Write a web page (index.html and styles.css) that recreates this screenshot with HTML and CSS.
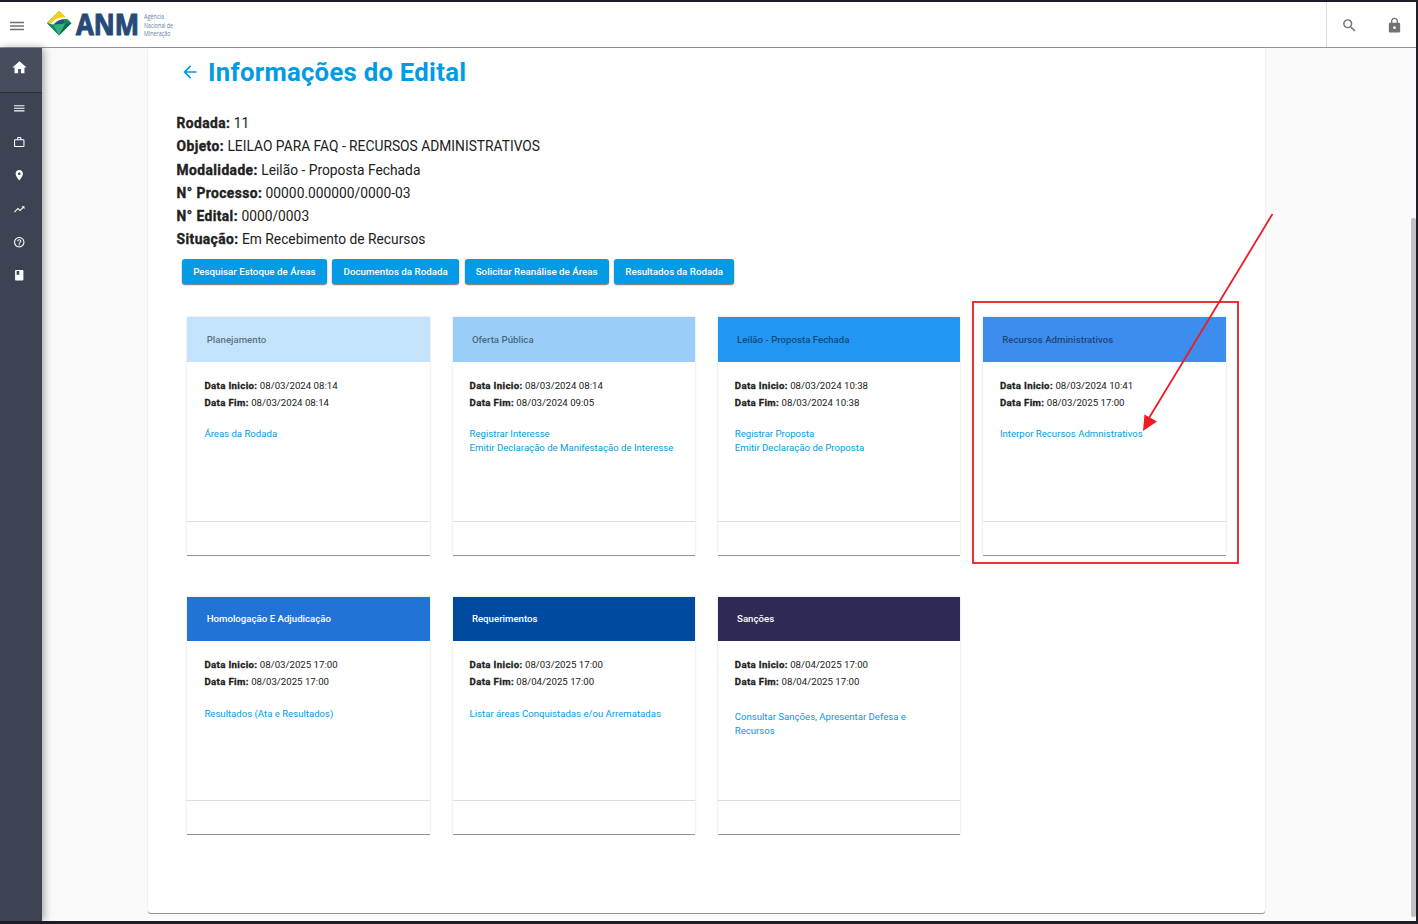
FILE: index.html
```
<!DOCTYPE html>
<html lang="pt-BR">
<head>
<meta charset="utf-8">
<title>Informações do Edital</title>
<link rel="stylesheet" href="styles.css">
</head>
<body>
<div class="window">
  <header class="topbar">
    <svg class="menu-icon" viewBox="0 0 14 10"><path d="M0 1.500h14M0 5h14M0 8.500h14"/></svg>
    <svg class="logo" viewBox="0 0 140 36">
      <path fill="#138a5f" d="M0 14 L12 2 L24.500 14 L12 26.500z"/>
      <path fill="#f5cf1b" d="M3.500 10.500 L12 1.800 L21 10 Q11 8.500 4.500 15.500 L0.500 14z"/>
      <path fill="#28527d" d="M7 15 Q11 9.500 17 10.600 Q17.500 13 15.500 15z"/>
      <path fill="#fff" d="M3 15.500 Q9 7 20.500 8.400 L22 10.200 Q12 9 6.500 15.500z"/>
      <path fill="#17845d" d="M0 14 L6.500 16 L12 26.500z"/>
      <path fill="#35b27b" d="M6.500 16 L18.500 14.500 L12 26.500z"/>
      <path fill="#0b6d4b" d="M18.500 14.500 L24.500 14 L12 26.500z"/>
      <text class="logo-name" x="29" y="26.300" textLength="63" lengthAdjust="spacingAndGlyphs">ANM</text>
      <text class="logo-sub" x="97" y="10.200" textLength="20" lengthAdjust="spacingAndGlyphs">Agência</text>
      <text class="logo-sub" x="97" y="18.700" textLength="29" lengthAdjust="spacingAndGlyphs">Nacional de</text>
      <text class="logo-sub" x="97" y="27" textLength="26.500" lengthAdjust="spacingAndGlyphs">Mineração</text>
    </svg>
    <div class="tools">
      <svg class="tool" viewBox="0 0 24 24"><path d="M15.500 14h-.79l-.28-.27A6.470 6.470 0 0 0 16 9.500 6.500 6.500 0 1 0 9.500 16c1.610 0 3.090-.59 4.230-1.570l.27.28v.79l5 4.990L20.490 19l-4.990-5zm-6 0C7.010 14 5 11.990 5 9.500S7.010 5 9.500 5 14 7.010 14 9.500 11.990 14 9.500 14z"/></svg>
      <svg class="tool" viewBox="0 0 24 24"><path d="M18 8h-1V6c0-2.760-2.240-5-5-5S7 3.240 7 6v2H6c-1.100 0-2 .9-2 2v10c0 1.100.9 2 2 2h12c1.100 0 2-.9 2-2V10c0-1.100-.9-2-2-2zm-6 9c-1.100 0-2-.9-2-2s.9-2 2-2 2 .9 2 2-.9 2-2 2zm3.100-9H8.900V6c0-1.710 1.390-3.100 3.100-3.100s3.100 1.390 3.100 3.100v2z"/></svg>
    </div>
  </header>
  <div class="main">
    <nav class="sidebar">
      <a class="home"><svg viewBox="0 0 24 24"><path d="M10 20v-6h4v6h5v-8h3L12 3 2 12h3v8z"/></svg></a>
      <a class="item"><svg viewBox="0 0 24 24"><path d="M2 18h20v-2.300H2zm0-4.900h20v-2.300H2zM2 6v2.300h20V6z"/></svg></a>
      <a class="item"><svg viewBox="0 0 24 24"><path d="M14 6V4h-4v2h4zM4 8v11h16V8H4zm16-2c1.110 0 2 .89 2 2v11c0 1.110-.89 2-2 2H4c-1.110 0-2-.89-2-2V8c0-1.110.89-2 2-2h4V4c0-1.110.89-2 2-2h4c1.110 0 2 .89 2 2v2h4z"/></svg></a>
      <a class="item"><svg viewBox="0 0 24 24"><path d="M12 2C8.130 2 5 5.130 5 9c0 5.250 7 13 7 13s7-7.750 7-13c0-3.870-3.130-7-7-7zm0 9.500a2.500 2.500 0 0 1 0-5 2.500 2.500 0 0 1 0 5z"/></svg></a>
      <a class="item"><svg viewBox="0 0 24 24"><path d="M16 6l2.290 2.290-4.880 4.880-4-4L2 16.590 3.410 18l6-6 4 4 6.300-6.290L22 12V6z"/></svg></a>
      <a class="item"><svg viewBox="0 0 24 24"><path d="M11 18h2v-2h-2v2zm1-16C6.480 2 2 6.480 2 12s4.480 10 10 10 10-4.480 10-10S17.520 2 12 2zm0 18c-4.410 0-8-3.590-8-8s3.590-8 8-8 8 3.590 8 8-3.590 8-8 8zm0-14c-2.210 0-4 1.790-4 4h2c0-1.100.9-2 2-2s2 .9 2 2c0 2-3 1.750-3 5h2c0-2.250 3-2.500 3-5 0-2.210-1.790-4-4-4z"/></svg></a>
      <a class="item"><svg viewBox="0 0 24 24"><path d="M18 2H6c-1.100 0-2 .9-2 2v16c0 1.100.9 2 2 2h12c1.100 0 2-.9 2-2V4c0-1.100-.9-2-2-2zM7 4h5v8l-2.500-1.500L7 12V4z"/></svg></a>
    </nav>
    <main class="content">
      <section class="sheet">
        <h1 class="title"><svg viewBox="0 0 24 24"><path d="M20 11H7.830l5.590-5.590L12 4l-8 8 8 8 1.410-1.410L7.830 13H20v-2z"/></svg><span>Informações do Edital</span></h1>
        <div class="info">
          <div><b>Rodada:</b> 11</div>
          <div><b>Objeto:</b> LEILAO PARA FAQ - RECURSOS ADMINISTRATIVOS</div>
          <div><b>Modalidade:</b> Leilão - Proposta Fechada</div>
          <div><b>N° Processo:</b> 00000.000000/0000-03</div>
          <div><b>N° Edital:</b> 0000/0003</div>
          <div><b>Situação:</b> Em Recebimento de Recursos</div>
        </div>
        <div class="actions">
          <button class="btn w1">Pesquisar Estoque de Áreas</button>
          <button class="btn w2">Documentos da Rodada</button>
          <button class="btn w3">Solicitar Reanálise de Áreas</button>
          <button class="btn w4">Resultados da Rodada</button>
        </div>
        <div class="cards">
          <article class="card">
            <h2 class="head planning">Planejamento</h2>
            <div class="body"><p><b>Data Inicio:</b> 08/03/2024 08:14</p><p><b>Data Fim:</b> 08/03/2024 08:14</p><div class="links"><a>Áreas da Rodada</a></div></div>
            <div class="foot"></div>
          </article>
          <article class="card">
            <h2 class="head offer">Oferta Pública</h2>
            <div class="body"><p><b>Data Inicio:</b> 08/03/2024 08:14</p><p><b>Data Fim:</b> 08/03/2024 09:05</p><div class="links"><a>Registrar Interesse</a><a>Emitir Declaração de Manifestação de Interesse</a></div></div>
            <div class="foot"></div>
          </article>
          <article class="card">
            <h2 class="head auction">Leilão - Proposta Fechada</h2>
            <div class="body"><p><b>Data Inicio:</b> 08/03/2024 10:38</p><p><b>Data Fim:</b> 08/03/2024 10:38</p><div class="links"><a>Registrar Proposta</a><a>Emitir Declaração de Proposta</a></div></div>
            <div class="foot"></div>
          </article>
          <article class="card">
            <h2 class="head appeals">Recursos Administrativos</h2>
            <div class="body"><p><b>Data Inicio:</b> 08/03/2024 10:41</p><p><b>Data Fim:</b> 08/03/2025 17:00</p><div class="links"><a>Interpor Recursos Admnistrativos</a></div></div>
            <div class="foot"></div>
          </article>
          <article class="card">
            <h2 class="head approval">Homologação E Adjudicação</h2>
            <div class="body"><p><b>Data Inicio:</b> 08/03/2025 17:00</p><p><b>Data Fim:</b> 08/03/2025 17:00</p><div class="links"><a>Resultados (Ata e Resultados)</a></div></div>
            <div class="foot"></div>
          </article>
          <article class="card">
            <h2 class="head requests">Requerimentos</h2>
            <div class="body"><p><b>Data Inicio:</b> 08/03/2025 17:00</p><p><b>Data Fim:</b> 08/04/2025 17:00</p><div class="links"><a>Listar áreas Conquistadas e/ou Arrematadas</a></div></div>
            <div class="foot"></div>
          </article>
          <article class="card">
            <h2 class="head sanctions">Sanções</h2>
            <div class="body"><p><b>Data Inicio:</b> 08/04/2025 17:00</p><p><b>Data Fim:</b> 08/04/2025 17:00</p><div class="links lower"><a>Consultar Sanções, Apresentar Defesa e Recursos</a></div></div>
            <div class="foot"></div>
          </article>
        </div>
      </section>
      <div class="scroll"></div>
    </main>
  </div>
</div>
<svg class="callout" viewBox="0 0 1418 924"><rect x="973" y="302" width="265" height="261"/><path d="M1272.500 214L1149 418"/><path class="tip" d="M1143 431L1144.500 414.500L1157 421.500z"/></svg>
</body>
</html>
```
FILE: styles.css
```
* { box-sizing: border-box; }
body { margin: 0; font-family: Roboto, "Liberation Sans", sans-serif; color: #212121; }
h1, h2, p { margin: 0; }
svg { display: block; flex: none; }
.window { width: 1418px; height: 924px; display: flex; flex-direction: column; overflow: hidden; background: #fafafa; border: solid #1d1d27; border-width: 2px 2px 3px 0; }
.topbar { flex: none; height: 46px; display: flex; align-items: center; background: #fff; border-bottom: 1px solid #949494; padding-left: 10px; }
.menu-icon { width: 14px; height: 10px; margin-top: 2px; fill: none; stroke: #717171; stroke-width: 1.4; }
.logo { width: 140px; height: 36px; margin: 4px 0 0 23px; overflow: visible; }
.logo-name { font: bold 28px "Open Sans", sans-serif; fill: #274b78; stroke: #274b78; stroke-width: 1.1; }
.logo-sub { font: 6.6px "Open Sans", sans-serif; fill: #6680a0; }
.tools { margin-left: auto; height: 45px; display: flex; align-items: center; gap: 28.500px; border-left: 1px solid #dedede; padding: 2px 13px 0 13.500px; }
.tool { width: 17px; height: 17px; fill: #717171; }
.main { flex: 1; min-height: 0; display: flex; }
.sidebar { flex: none; width: 42px; background: #3e4353; box-shadow: 2px 0 8px rgba(0,0,0,.35); }
.home { height: 45px; display: flex; align-items: center; padding: 0 0 5px 11px; background: #484d5d; border-bottom: 1px solid #2c303c; }
.home svg { width: 17px; height: 17px; fill: #fff; }
.item { height: 33.4px; display: flex; align-items: center; padding: 0 0 2px 13px; }
.item svg { width: 12.500px; height: 12.500px; fill: #fff; }
.content { flex: 1; min-width: 0; display: flex; padding-left: 106px; }
.sheet { width: 1117px; height: 865px; padding: 8px 28px 0 28.600px; background: #fff; border-radius: 0 0 3px 3px; box-shadow: 0 1px 0 #929292, 0 0 2px rgba(0,0,0,.16); }
.scroll { width: 5px; height: 699px; margin: 170px 0 0 auto; border-radius: 2px; background: #c2c2c2; }
.title { height: 31px; display: flex; align-items: center; gap: 7.500px; padding-left: 3.900px; font-size: 25.700px; letter-spacing: .28px; font-weight: 700; color: #039be5; white-space: nowrap; }
.title svg { width: 20px; height: 20px; fill: currentColor; }
.info { margin-top: 25.200px; font-size: 13.800px; line-height: 23.2px; white-space: nowrap; }
.info b { letter-spacing: .42px; -webkit-text-stroke: .35px #212121; }
.actions { display: flex; gap: 5.500px; margin: 7.800px 0 0 5.400px; }
.btn { height: 25px; padding: 0; border: 0; border-radius: 3px; background: #039be5; color: #fff; font: 500 9.780px Roboto, sans-serif; white-space: nowrap; box-shadow: 0 1px 1px rgba(0,0,0,.38), 0 1px 2px rgba(0,0,0,.25); }
.w1 { width: 144.700px; } .w2 { width: 127px; } .w3 { width: 144px; } .w4 { width: 120px; }
.cards { display: grid; grid-template-columns: repeat(4, 242.6px); column-gap: 22.600px; row-gap: 41.800px; margin: 33px 0 0 10.800px; }
.card { height: 237.600px; display: flex; flex-direction: column; background: #fff; box-shadow: 0 1px 0 #929292, 0 0 2px rgba(0,0,0,.16); }
.head { flex: none; height: 44.500px; line-height: 45px; padding-left: 19.300px; font-size: 9.670px; font-weight: 500; color: rgba(0,0,0,.54); }
.planning { background: #c3e2fc; }
.offer { background: #9acdf8; }
.auction { background: #2196f3; }
.appeals { background: #3c8dee; }
.approval, .requests, .sanctions { color: #fff; line-height: 44px; }
.approval { background: #2174d6; }
.requests { background: #004b9f; }
.sanctions { background: #2d2b54; }
.body { flex: 1; padding: 15px 17px 0; font-size: 9.670px; line-height: 17px; }
.body b { letter-spacing: .35px; -webkit-text-stroke: .3px #212121; }
.links { margin-top: 16.500px; font-size: 9.600px; line-height: 14px; color: #039be5; }
.links.lower { margin-top: 19.500px; }
.links a { display: block; }
.foot { height: 34px; border-top: 1px solid #dedede; }
.callout { position: absolute; left: 0; top: 0; width: 1418px; height: 924px; fill: none; stroke: #ed1c24; stroke-width: 1.800; pointer-events: none; }
.callout .tip { fill: #ed1c24; stroke: none; }
```
